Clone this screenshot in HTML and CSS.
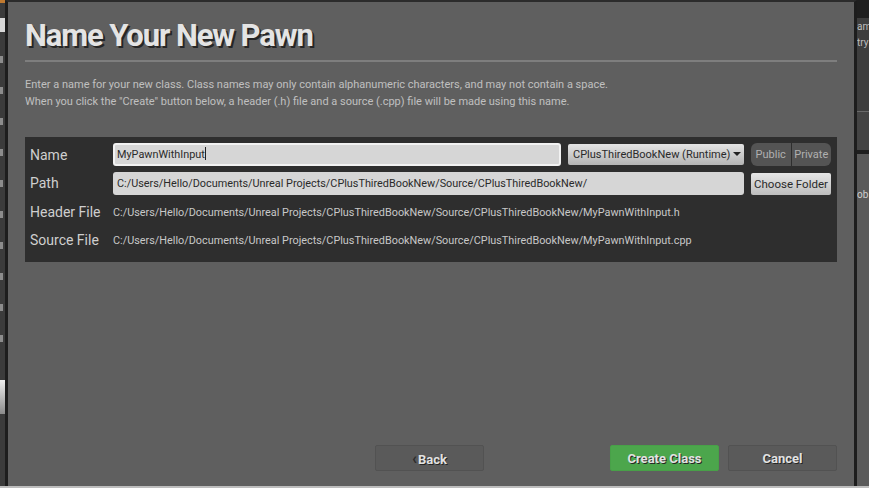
FILE: index.html
```html
<!DOCTYPE html>
<html lang="en">
<head>
    <meta charset="UTF-8">
    <meta name="viewport" content="width=device-width, initial-scale=1.0">
    <title>Name Your New Pawn</title>
    <link rel="stylesheet" href="styles.css">
</head>
<body>
    <div class="editor-left">
        <div class="blip orange"></div>
        <div class="blip white"></div>
        <div class="mark"></div><div class="mark"></div><div class="mark"></div><div class="mark"></div>
        <div class="mark"></div><div class="mark"></div><div class="mark"></div><div class="mark"></div>
        <div class="mark"></div><div class="mark"></div>
        <div class="blip white low"></div>
    </div>

    <div class="dialog">
        <h1>Name Your New Pawn</h1>
        <div class="rule"></div>

        <div class="intro-text">
            <p>Enter a name for your new class. Class names may only contain alphanumeric characters, and may not contain a space.</p>
            <p>When you click the "Create" button below, a header (.h) file and a source (.cpp) file will be made using this name.</p>
        </div>

        <div class="class-panel">
            <div class="label">Name</div>
            <div class="field focused">MyPawnWithInput<span class="caret"></span></div>
            <div class="dropdown">CPlusThiredBookNew (Runtime)<span class="arrow"></span></div>
            <div class="toggle">
                <span>Public</span>
                <span>Private</span>
            </div>

            <div class="label low">Path</div>
            <div class="field wide low">C:/Users/Hello/Documents/Unreal Projects/CPlusThiredBookNew/Source/CPlusThiredBookNew/</div>
            <div class="light-button low">Choose Folder</div>

            <div class="label">Header File</div>
            <div class="file-path">C:/Users/Hello/Documents/Unreal Projects/CPlusThiredBookNew/Source/CPlusThiredBookNew/MyPawnWithInput.h</div>

            <div class="label">Source File</div>
            <div class="file-path">C:/Users/Hello/Documents/Unreal Projects/CPlusThiredBookNew/Source/CPlusThiredBookNew/MyPawnWithInput.cpp</div>
        </div>

        <div class="actions">
            <button class="back"><span class="chev">&lsaquo;</span>Back</button>
            <button class="create">Create Class</button>
            <button class="cancel">Cancel</button>
        </div>
    </div>

    <div class="editor-right">
        <div class="r-top"></div>
        <div class="r-panel">
            <span>am</span>
            <span>try</span>
        </div>
        <div class="r-mid"></div>
        <div class="r-bar"><div class="r-tick"></div></div>
        <div class="r-rest"><span>ob</span></div>
    </div>
</body>
</html>
```

FILE: styles.css
```css
body {
    margin: 0;
    height: 488px;
    display: flex;
    overflow: hidden;
    font-family: Roboto, "Liberation Sans", sans-serif;
    background-color: #5c5c5c;
    border-bottom: 2px solid #bdbdbd;
    box-sizing: border-box;
}
.editor-left {
    width: 5px;
    background-color: #3b3b3b;
    display: flex;
    flex-direction: column;
    overflow: hidden;
}
.blip {
    flex: none;
}
.blip.orange {
    height: 3px;
    background-color: #c07a30;
}
.blip.white {
    height: 14px;
    margin-top: 15px;
    background-color: #d8d8d8;
}
.blip.white.low {
    height: 34px;
    margin-top: 38px;
    background: linear-gradient(#eeeeee, #8a8a8a);
}
.mark {
    flex: none;
    width: 3px;
    height: 7px;
    margin-top: 24px;
    background-color: #8c8c8c;
}
.dialog {
    flex: 1;
    display: flex;
    flex-direction: column;
    background-color: #5f5f5f;
    border-left: 3px solid #1d1d1d;
    border-right: 3px solid #1d1d1d;
    border-top: 2px solid #2b2b2b;
    padding: 0 17px 15px 17px;
    color: #c4c4c4;
}
h1 {
    margin: 16px 0 0 0;
    font-size: 31px;
    line-height: 36px;
    font-weight: bold;
    letter-spacing: -1.1px;
    color: #e4e4e4;
    text-shadow: 2px 2px 0 #262626;
}
.rule {
    height: 2px;
    margin-top: 6px;
    background-color: #7e7e7e;
}
.intro-text {
    margin-top: 14px;
    font-size: 11px;
    line-height: 17px;
    color: #c0c0c0;
}
.intro-text p {
    margin: 0;
}
.class-panel {
    margin-top: 27px;
    background-color: #2e2e2e;
    padding: 6px 6px 11px 5px;
    display: grid;
    grid-template-columns: 76px 1fr 176px 80px;
    grid-template-rows: 23px 29px 34px 22px;
    column-gap: 7px;
    align-items: center;
}
.class-panel .low {
    align-self: end;
}
.class-panel .label.low {
    line-height: 23px;
}
.label {
    font-size: 14px;
    color: #cfcfcf;
    white-space: nowrap;
}
.field {
    height: 23px;
    box-sizing: border-box;
    background-color: #d6d6d6;
    border-radius: 3px;
    font-size: 10.85px;
    line-height: 23px;
    padding-left: 4px;
    color: #2a2a2a;
    white-space: nowrap;
    overflow: hidden;
}
.field.focused {
    border: 2px solid #f2f2f2;
    line-height: 19px;
    padding-left: 2px;
}
.field.wide {
    grid-column: 2 / 4;
}
.caret {
    display: inline-block;
    width: 1px;
    height: 13px;
    background-color: #222;
    vertical-align: -2px;
}
.dropdown {
    height: 21px;
    box-sizing: border-box;
    background: linear-gradient(#e4e4e4, #b4b4b4);
    border-radius: 2px;
    font-size: 11px;
    line-height: 21px;
    padding-left: 5px;
    color: #2a2a2a;
    white-space: nowrap;
}
.arrow {
    display: inline-block;
    width: 0;
    height: 0;
    margin-left: 3px;
    border-left: 4px solid transparent;
    border-right: 4px solid transparent;
    border-top: 4px solid #222;
    vertical-align: 2px;
}
.toggle {
    height: 23px;
    display: flex;
    background-color: #545454;
    border-radius: 6px;
    overflow: hidden;
    font-size: 11px;
    color: #b0b0b0;
}
.toggle span {
    flex: 1;
    text-align: center;
    line-height: 23px;
}
.toggle span + span {
    border-left: 1px solid #2e2e2e;
}
.light-button {
    height: 22px;
    background: linear-gradient(#e6e6e6, #bdbdbd);
    border-radius: 2px;
    font-size: 11.5px;
    line-height: 22px;
    text-align: center;
    color: #2a2a2a;
    white-space: nowrap;
}
.file-path {
    grid-column: 2 / 5;
    font-size: 10.85px;
    color: #c8c8c8;
    white-space: nowrap;
}
.actions {
    margin-top: auto;
    display: flex;
    justify-content: flex-end;
    gap: 9px;
}
button {
    width: 109px;
    height: 26px;
    font-family: Roboto, "Liberation Sans", sans-serif;
    font-size: 13px;
    font-weight: bold;
    color: #e2e2e2;
    text-shadow: 1px 1px 0 #252525;
    background-color: #5a5a5a;
    border: 1px solid #525252;
    border-radius: 2px;
    padding: 0;
    cursor: pointer;
}
button.back {
    margin-right: 117px;
}
button.create {
    background-color: #4ca64c;
    border-color: #48a048;
}
.chev {
    color: #2c2c2c;
    text-shadow: none;
    font-size: 16px;
    margin-right: 1px;
}
.editor-right {
    width: 12px;
    display: flex;
    flex-direction: column;
    overflow: hidden;
    font-size: 10px;
    color: #bdbdbd;
    white-space: nowrap;
}
.r-top {
    height: 18px;
    background-color: #1f1f1f;
}
.r-panel {
    height: 94px;
    background-color: #3e3e3e;
    border-bottom: 1px solid #6a6a6a;
    display: flex;
    flex-direction: column;
    line-height: 16px;
    padding-top: 1px;
    box-sizing: border-box;
}
.r-mid {
    height: 38px;
    background-color: #444;
}
.r-bar {
    height: 4px;
    background-color: #1f1f1f;
}
.r-tick {
    width: 2px;
    height: 14px;
    margin-left: 7px;
    background-color: #1f1f1f;
}
.r-rest {
    flex: 1;
    background-color: #5a5a5a;
    padding-top: 35px;
    color: #cfcfcf;
}
```
